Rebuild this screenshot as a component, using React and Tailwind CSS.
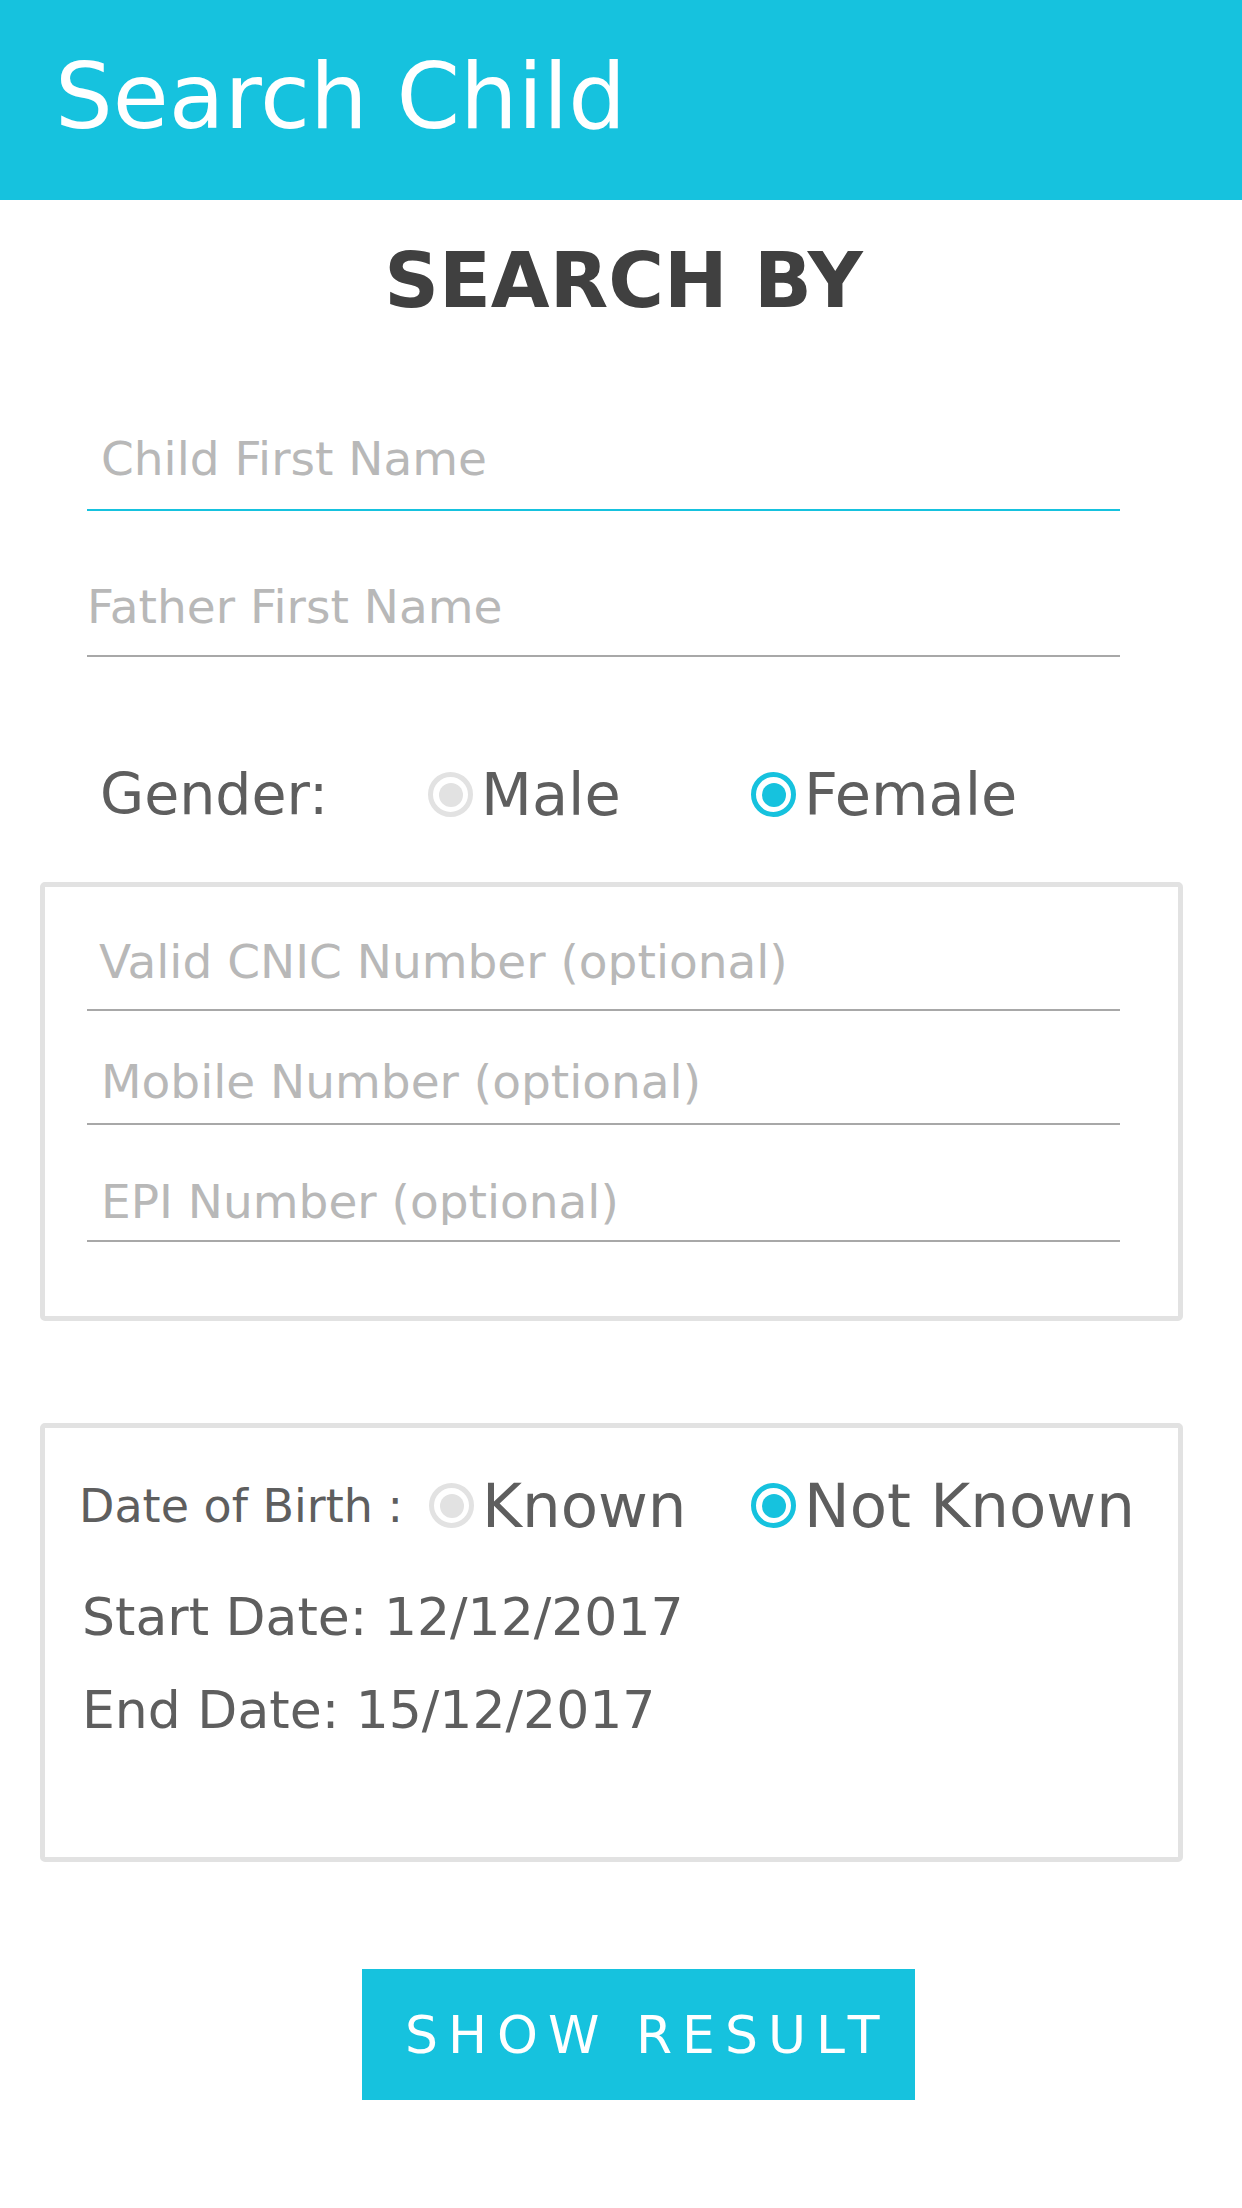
import { useState } from 'react';

const Radio = ({ checked }) => (
    <span
        className={`flex items-center justify-center w-[45px] h-[45px] shrink-0 rounded-full border-[5px] ${
            checked ? 'border-[#16c2de]' : 'border-[#e2e2e2]'
        }`}
    >
        <span className={`w-[24px] h-[24px] rounded-full ${checked ? 'bg-[#16c2de]' : 'bg-[#e2e2e2]'}`} />
    </span>
);

const Field = ({ placeholder, focused, className = '' }) => (
    <div className={`w-[1033px] ml-[47px] border-b-2 ${focused ? 'border-[#16c2de]' : 'border-[#a8a8a8]'} ${className}`}>
        <input
            placeholder={placeholder}
            className="block w-full h-[47px] p-0 bg-transparent outline-none text-[47px] leading-none text-[#5e5e5e] placeholder:text-[#b8b8b8]"
        />
    </div>
);

const App = () => {
    const [gender, setGender] = useState('female');
    const [dobKnown, setDobKnown] = useState(false);

    return (
        <div className="w-[1242px] min-h-[2208px] bg-white font-['DejaVu_Sans',sans-serif]">
            {/* Header */}
            <header className="h-[200px] bg-[#16c2de] pt-[51px] pl-[55px]">
                <h1 className="text-[91px] leading-none font-normal text-white">Search Child</h1>
            </header>

            <div className="ml-[40px] w-[1143px]">
                <h2 className="mt-[43px] text-center pl-[24px] text-[76px] leading-none font-bold text-[#404040]">
                    SEARCH BY
                </h2>

                {/* Name fields */}
                <Field placeholder="Child First Name" focused className="mt-[116px] pl-[14px] pb-[27px]" />
                <Field placeholder="Father First Name" className="mt-[72px] pb-[25px]" />

                {/* Gender */}
                <div className="mt-[115px] h-[45px] flex items-center pl-[60px] leading-none text-[#5e5e5e]">
                    <span className="w-[328px] shrink-0 text-[57px]">Gender:</span>
                    <button
                        onClick={() => setGender('male')}
                        className="w-[323px] shrink-0 flex items-center gap-[8px] text-[59px]"
                    >
                        <Radio checked={gender === 'male'} />
                        <span>Male</span>
                    </button>
                    <button onClick={() => setGender('female')} className="flex items-center gap-[8px] text-[59px]">
                        <Radio checked={gender === 'female'} />
                        <span>Female</span>
                    </button>
                </div>

                {/* Optional numbers */}
                <div className="mt-[65px] border-[5px] border-[#e2e2e2] rounded-[5px] pt-[51px] pb-[74px]">
                    <div className="-ml-[5px]">
                        <Field placeholder="Valid CNIC Number (optional)" className="pl-[12px] pb-[24px]" />
                        <Field placeholder="Mobile Number (optional)" className="mt-[47px] pl-[14px] pb-[18px]" />
                        <Field placeholder="EPI Number (optional)" className="mt-[53px] pl-[14px] pb-[15px]" />
                    </div>
                </div>

                {/* Date of birth */}
                <div className="mt-[102px] border-[5px] border-[#e2e2e2] rounded-[5px] pt-[55px] pb-[121px] pl-[34px] text-[#5e5e5e]">
                    <div className="h-[45px] flex items-center leading-none">
                        <span className="w-[350px] shrink-0 text-[46px]">Date of Birth :</span>
                        <button
                            onClick={() => setDobKnown(true)}
                            className="w-[322px] shrink-0 flex items-center gap-[8px] text-[61px]"
                        >
                            <Radio checked={dobKnown} />
                            <span>Known</span>
                        </button>
                        <button onClick={() => setDobKnown(false)} className="flex items-center gap-[8px] text-[61px]">
                            <Radio checked={!dobKnown} />
                            <span>Not Known</span>
                        </button>
                    </div>
                    <p className="mt-[63px] pl-[3px] text-[52px] leading-none">Start Date: 12/12/2017</p>
                    <p className="mt-[41px] pl-[3px] text-[52px] leading-none">End Date: 15/12/2017</p>
                </div>
            </div>

            {/* Action */}
            <button className="mt-[107px] ml-[362px] w-[553px] h-[131px] flex items-center pl-[43px] bg-[#16c2de] text-white text-[52px] leading-none tracking-[10px]">
                SHOW RESULT
            </button>
        </div>
    );
};

export default App;
